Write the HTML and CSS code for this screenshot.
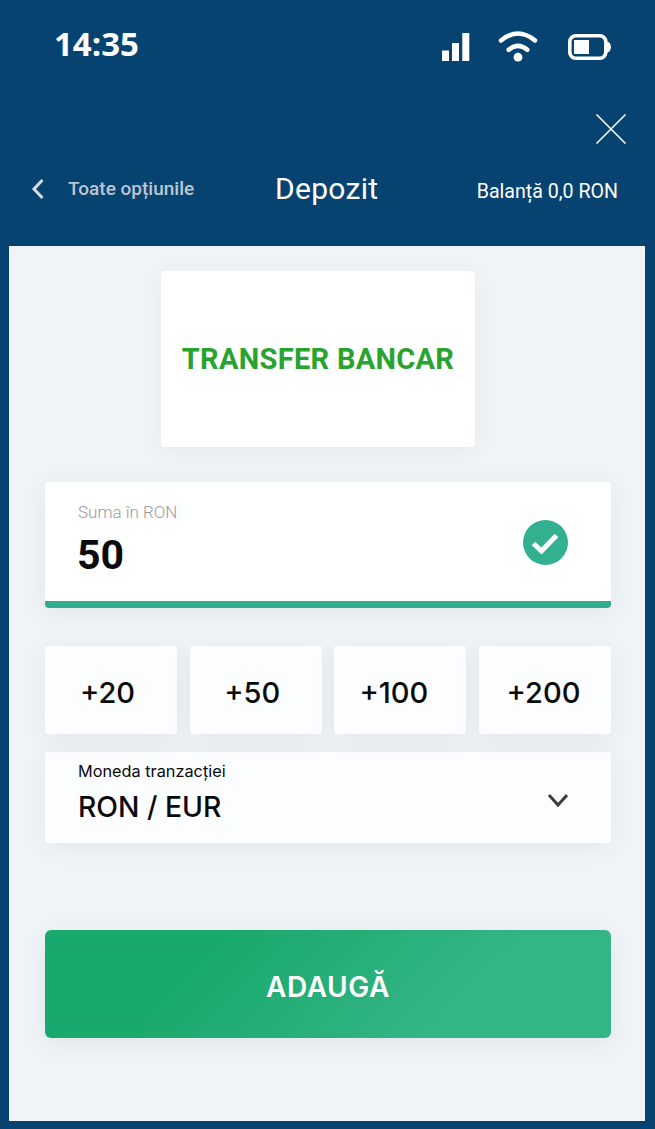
FILE: index.html
```html
<!DOCTYPE html>
<html>

<head>
    <title>Depozit</title>
    <link rel="stylesheet" href="styles.css">
</head>

<body>
    <header class="top">
        <div class="status">
            <span class="time">14:35</span>
            <div class="status-icons">
                <svg class="ic-signal" width="28" height="28" viewBox="0 0 28 28">
                    <rect x="0" y="17.500" width="7" height="10.500" fill="#fff"/>
                    <rect x="10" y="10" width="7" height="18" fill="#fff"/>
                    <rect x="20.300" y="0" width="7" height="28" fill="#fff"/>
                </svg>
                <svg class="ic-wifi" width="40" height="31" viewBox="0 0 40 31">
                    <path d="M3 9.500Q20 -4.500 37 9.500" fill="none" stroke="#fff" stroke-width="4.500" stroke-linecap="round"/>
                    <path d="M10.700 18.800Q20 10.800 29.300 18.800" fill="none" stroke="#fff" stroke-width="4.500" stroke-linecap="round"/>
                    <circle cx="20" cy="26.200" r="4.400" fill="#fff"/>
                </svg>
                <svg class="ic-battery" width="43" height="26" viewBox="0 0 43 26">
                    <rect x="1.800" y="1.800" width="36" height="22.400" rx="6" fill="none" stroke="#fff" stroke-width="3.600"/>
                    <rect x="6" y="6" width="15" height="14" fill="#fff"/>
                    <path d="M38 7c3 .5 5 2.500 5 6s-2 5.500-5 6z" fill="#fff"/>
                </svg>
            </div>
        </div>
        <div class="close-row">
            <svg width="30" height="30" viewBox="0 0 30 30">
                <path d="M.5 .5L29.500 29.500M29.500 .5L.5 29.500" stroke="#fff" stroke-width="1.500" fill="none"/>
            </svg>
        </div>
        <nav class="nav">
            <div class="back">
                <svg width="14" height="22" viewBox="0 0 14 22">
                    <path d="M11.500 2L3 11L11.500 20" stroke="#d5dce3" stroke-width="3" fill="none"/>
                </svg>
                <span>Toate opțiunile</span>
            </div>
            <h1>Depozit</h1>
            <div class="balance">Balanță 0,0 RON</div>
        </nav>
    </header>

    <main class="panel">
        <div class="method-card">TRANSFER BANCAR</div>

        <div class="amount">
            <div>
                <div class="amount-label">Suma în RON</div>
                <div class="amount-value">50</div>
            </div>
            <svg class="ic-ok" width="45" height="45" viewBox="0 0 45 45">
                <circle cx="22.500" cy="22.500" r="22.500" fill="#33b08f"/>
                <path d="M10.500 23.500L18.500 31L33.500 15.500" stroke="#fff" stroke-width="5" fill="none"/>
            </svg>
        </div>

        <div class="quick">
            <div class="quick-btn">+20</div>
            <div class="quick-btn">+50</div>
            <div class="quick-btn">+100</div>
            <div class="quick-btn">+200</div>
        </div>

        <div class="currency">
            <div>
                <div class="currency-label">Moneda tranzacției</div>
                <div class="currency-value">RON / EUR</div>
            </div>
            <svg class="ic-chevron" width="22" height="15" viewBox="0 0 22 15">
                <path d="M3 2L12 12L21 2" stroke="#3d3d3d" stroke-width="3" fill="none"/>
            </svg>
        </div>

        <button class="submit">ADAUGĂ</button>
    </main>
</body>

</html>
```

FILE: styles.css
```css
html, body {
    margin: 0;
    padding: 0;
}
body {
    height: 1129px;
    overflow: hidden;
    background-color: #074370;
    font-family: "Inter", sans-serif;
    color: #0a0a0a;
}
.top {
    height: 246px;
    box-sizing: border-box;
    color: #fff;
}
.status {
    height: 90px;
    padding: 23px 44px 0 54px;
    box-sizing: border-box;
    display: flex;
    justify-content: space-between;
    align-items: flex-start;
}
.time {
    font-family: "Open Sans", sans-serif;
    font-weight: 700;
    font-size: 33px;
    line-height: 42px;
}
.status-icons {
    display: flex;
    align-items: flex-start;
    margin-top: 7px;
}
.ic-signal {
    margin-top: 3px;
    margin-right: 28px;
}
.ic-wifi {
    margin-top: 1px;
    margin-right: 30px;
}
.ic-battery {
    margin-top: 4px;
}
.close-row {
    height: 60px;
    padding: 24px 29px 0 0;
    box-sizing: border-box;
    display: flex;
    justify-content: flex-end;
}
.nav {
    display: flex;
    align-items: center;
    padding: 21px 37px 0 31px;
}
.back {
    width: 244px;
    display: flex;
    align-items: center;
    gap: 23px;
    font-family: "Roboto", sans-serif;
    font-size: 19px;
    font-weight: 500;
    color: #bcc6d1;
}
.nav h1 {
    margin: 0;
    font-family: "Roboto", sans-serif;
    font-size: 30px;
    font-weight: 400;
    color: #fff;
    letter-spacing: .3px;
}
.balance {
    margin-left: auto;
    margin-top: 5px;
    font-family: "Roboto", sans-serif;
    font-size: 19.600px;
    color: #fff;
}
.panel {
    height: 875px;
    margin: 0 10px 0 9px;
    box-sizing: border-box;
    padding: 25px 34px 0 36px;
    background-color: #f0f4f7;
}
.method-card {
    width: 314px;
    height: 176px;
    margin: 0 0 35px 116px;
    display: flex;
    align-items: center;
    justify-content: center;
    background: #fff;
    border-radius: 4px;
    box-shadow: 0 4px 24px rgba(40, 70, 100, .06);
    font-family: "Roboto", sans-serif;
    font-weight: 700;
    font-size: 29px;
    letter-spacing: .3px;
    color: #29a32f;
}
.amount {
    height: 126px;
    box-sizing: border-box;
    padding: 20px 43px 0 33px;
    display: flex;
    justify-content: space-between;
    background: #fff;
    border-bottom: 7px solid #33ad8f;
    border-radius: 4px;
    box-shadow: 0 4px 24px rgba(40, 70, 100, .08);
}
.amount-label {
    font-family: "Roboto", sans-serif;
    font-weight: 300;
    font-size: 17px;
    color: #9c9c9c;
}
.amount-value {
    margin: 9px 0 0 -1px;
    font-family: "Roboto", sans-serif;
    font-weight: 700;
    font-size: 41px;
    color: #0a0a0a;
}
.ic-ok {
    margin-top: 18px;
}
.quick {
    margin-top: 38px;
    display: grid;
    grid-template-columns: repeat(4, 132px);
    justify-content: space-between;
}
.quick-btn {
    height: 88px;
    box-sizing: border-box;
    padding: 5px 7px 0 0;
    display: flex;
    align-items: center;
    justify-content: center;
    background: #fcfdfe;
    border-radius: 3px;
    box-shadow: 0 4px 24px rgba(40, 70, 100, .07);
    font-size: 29px;
    font-weight: 500;
}
.quick-btn:nth-child(3) {
    padding-right: 13px;
}
.quick-btn:nth-child(4) {
    padding-right: 3px;
}
.currency {
    margin-top: 18px;
    height: 91px;
    box-sizing: border-box;
    padding: 9px 43px 0 33px;
    display: flex;
    justify-content: space-between;
    background: #fcfdfe;
    border-radius: 3px;
    box-shadow: 0 4px 24px rgba(40, 70, 100, .07);
}
.currency-label {
    font-size: 16.300px;
    line-height: 20px;
}
.currency-value {
    margin-top: 8px;
    font-size: 28.300px;
    font-weight: 500;
    line-height: 36px;
}
.ic-chevron {
    margin-top: 32px;
}
.submit {
    display: block;
    width: 100%;
    height: 108px;
    margin-top: 87px;
    padding: 6px 0 0;
    border: none;
    border-radius: 6px;
    background: linear-gradient(135deg, #1aa96c 28%, #33b585 72%);
    box-shadow: 0 6px 24px rgba(40, 70, 100, .08);
    color: #fff;
    font-family: "Inter", sans-serif;
    font-size: 28px;
    font-weight: 600;
    letter-spacing: .6px;
}
```
